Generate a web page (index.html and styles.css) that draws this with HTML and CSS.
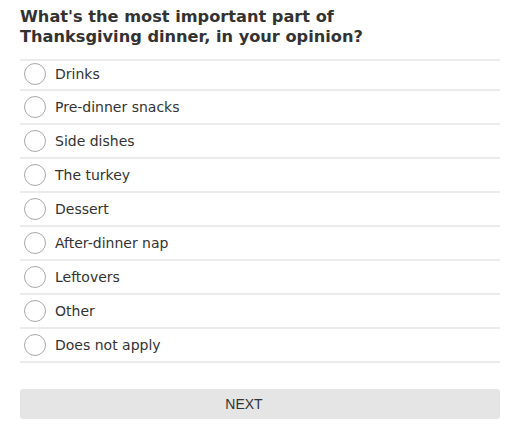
FILE: index.html
```html
<!DOCTYPE html>
<html>
<head>
<meta charset="utf-8">
<link rel="stylesheet" href="styles.css">
</head>
<body>
<div class="survey">
  <h1 class="question">What's the most important part of Thanksgiving dinner, in your opinion?</h1>
  <ul class="options">
    <li class="option"><span class="radio"></span><span class="label">Drinks</span></li>
    <li class="option"><span class="radio"></span><span class="label">Pre-dinner snacks</span></li>
    <li class="option"><span class="radio"></span><span class="label">Side dishes</span></li>
    <li class="option"><span class="radio"></span><span class="label">The turkey</span></li>
    <li class="option"><span class="radio"></span><span class="label">Dessert</span></li>
    <li class="option"><span class="radio"></span><span class="label">After-dinner nap</span></li>
    <li class="option"><span class="radio"></span><span class="label">Leftovers</span></li>
    <li class="option"><span class="radio"></span><span class="label">Other</span></li>
    <li class="option"><span class="radio"></span><span class="label">Does not apply</span></li>
  </ul>
  <button class="next">NEXT</button>
</div>
</body>
</html>
```

FILE: styles.css
```css
html, body {
  margin: 0;
  padding: 0;
  background: #ffffff;
}

.survey {
  padding: 7px 20px 0 20px;
  font-family: "DejaVu Sans", sans-serif;
  color: #333333;
}

.question {
  margin: 0 0 12px 0;
  font-size: 16.2px;
  line-height: 20px;
  font-weight: bold;
  color: #333333;
  width: 370px;
}

.options {
  list-style: none;
  margin: 0;
  padding: 0;
  border-top: 2px solid #ebebeb;
}

.option {
  display: flex;
  align-items: center;
  height: 32px;
  padding-left: 4px;
  border-bottom: 2px solid #ebebeb;
}

.option:first-child {
  height: 26px;
  padding-bottom: 2px;
}

.radio {
  box-sizing: border-box;
  width: 22px;
  height: 22px;
  border: 1px solid #a8a8a8;
  border-radius: 50%;
  margin-right: 9px;
  flex-shrink: 0;
}

.label {
  font-size: 14px;
  color: #333333;
}

.next {
  display: block;
  width: 100%;
  height: 30px;
  margin-top: 26px;
  border: none;
  border-radius: 3px;
  background: #e5e5e5;
  font-family: "Liberation Sans", Arial, sans-serif;
  font-size: 14px;
  color: #333333;
  padding: 0 32px 0 0;
}
```
